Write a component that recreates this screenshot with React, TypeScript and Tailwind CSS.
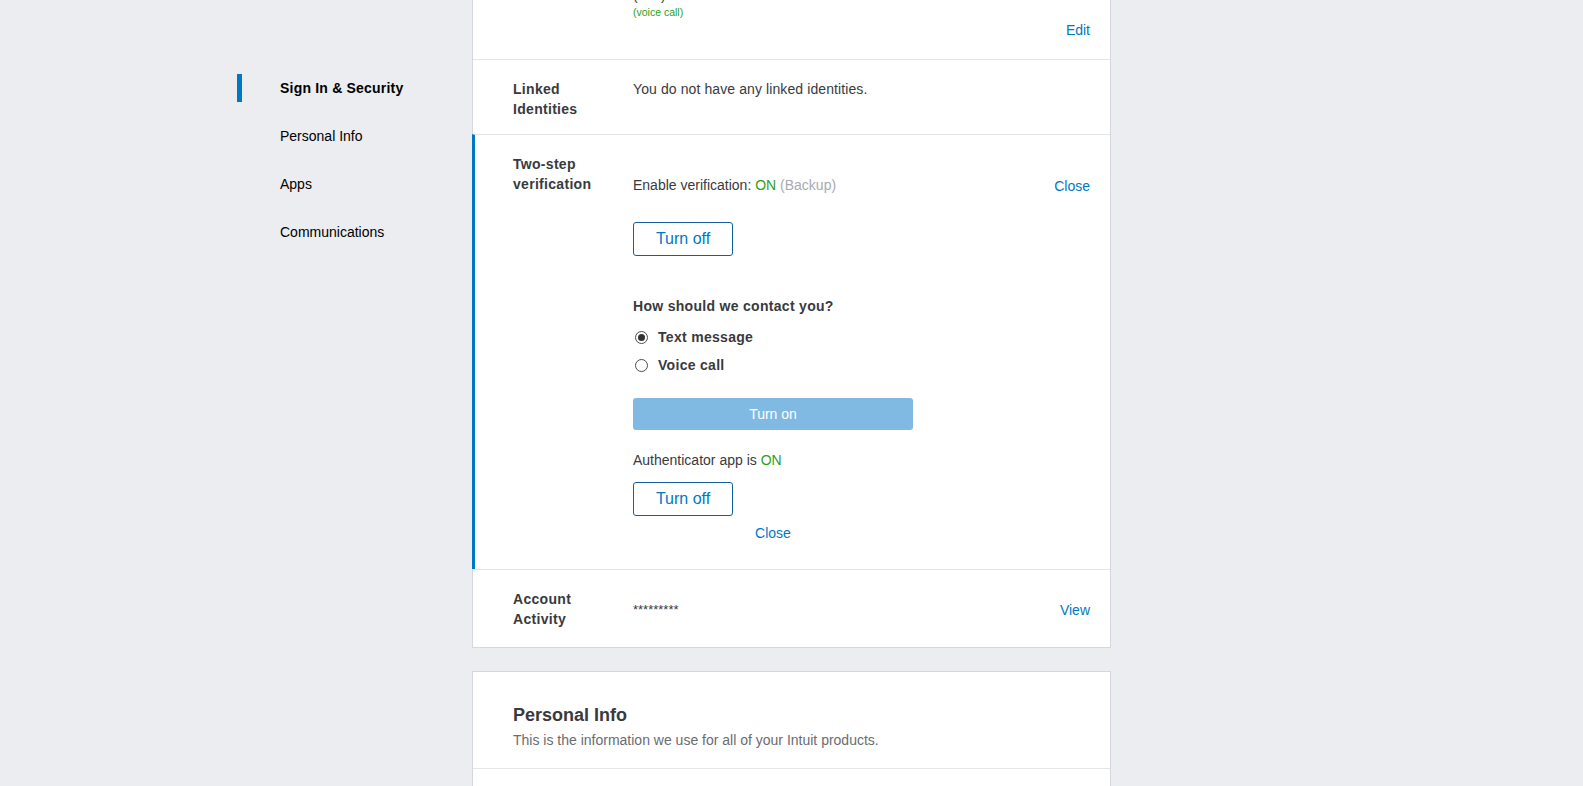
import React from 'react';

const navItems = ['Sign In & Security', 'Personal Info', 'Apps', 'Communications'];

function Sidebar() {
  return (
    <nav className="w-[235px] shrink-0 pt-[64px]">
      {navItems.map((item, i) =>
        i === 0 ? (
          <div key={item} className="flex h-12 items-center">
            <span className="h-[28px] w-[5px] bg-[#0077c5]" />
            <span className="ml-[38px] font-bold tracking-[0.2px] text-black">{item}</span>
          </div>
        ) : (
          <div key={item} className="flex h-12 items-center pl-[43px] text-black">
            {item}
          </div>
        )
      )}
    </nav>
  );
}

function Radio({ checked, label }: { checked?: boolean; label: string }) {
  return (
    <label className="flex h-7 items-center">
      <span className="ml-[2px] flex h-[13px] w-[13px] items-center justify-center rounded-full border border-[#4d4d4d] bg-white">
        {checked && <span className="h-[7px] w-[7px] rounded-full bg-[#333]" />}
      </span>
      <span className="ml-[10px] font-bold tracking-[0.3px]">{label}</span>
    </label>
  );
}

export default function App() {
  return (
    <div className="h-screen overflow-hidden bg-[#ebedf0] font-['Liberation_Sans',Arial,sans-serif] text-[14px] text-[#393a3d]">
      <div className="flex items-start pl-[237px]">
        <Sidebar />

        <main className="-mt-[68px] w-[639px]">
          {/* Sign In & Security card (scrolled) */}
          <section className="border border-[#d4d7dc] bg-white">
            <div className="flex pl-[40px] pr-5 pt-[18px] pb-[19px]">
              <div className="mr-[30px] w-[90px] font-bold leading-5">Phone</div>
              <div className="flex-1">
                <div className="leading-5">(555) 555-0142</div>
                <div className="text-[10.5px] leading-[14px] text-[#2ca01c]">(text message)</div>
                <div className="leading-5">(555) 555-0187</div>
                <div className="text-[10.5px] leading-[14px] text-[#2ca01c]">(voice call)</div>
                <div className="mt-px text-right leading-5">
                  <a className="text-[#0077c5]">Edit</a>
                </div>
              </div>
            </div>

            <div className="flex border-t border-[#e3e5e8] pl-[40px] pr-5 pt-[19px] pb-[15px]">
              <div className="mr-[30px] w-[90px] font-bold leading-5 tracking-[0.3px]">Linked Identities</div>
              <div className="flex-1 leading-5 tracking-[0.1px]">You do not have any linked identities.</div>
            </div>

            <div className="-ml-px flex border-t border-l-[3px] border-t-[#e3e5e8] border-l-[#0077c5] pl-[38px] pr-5 pt-[19px] pb-[26px]">
              <div className="mr-[30px] w-[90px] font-bold leading-5 tracking-[0.3px]">Two-step verification</div>
              <div className="flex-1 pt-[21px]">
                <div className="flex justify-between leading-5">
                  <span>
                    Enable verification: <span className="text-[#2ca01c]">ON</span>{' '}
                    <span className="text-[#a8abb0]">(Backup)</span>
                  </span>
                  <a className="mt-px text-[#0077c5]">Close</a>
                </div>
                <button className="mt-[26px] block h-[34px] w-[100px] rounded-[3px] border border-[#14609e] text-[16px] text-[#0077c5]">
                  Turn off
                </button>
                <p className="mt-[40px] font-bold leading-5 tracking-[0.3px]">How should we contact you?</p>
                <div className="mt-[7px]">
                  <Radio checked label="Text message" />
                  <Radio label="Voice call" />
                </div>
                <button className="mt-[19px] block h-[32px] w-[280px] rounded-[3px] bg-[#80bae3] text-white">
                  Turn on
                </button>
                <p className="mt-[20px] leading-5">
                  Authenticator app is <span className="text-[#2ca01c]">ON</span>
                </p>
                <button className="mt-[12px] block h-[34px] w-[100px] rounded-[3px] border border-[#14609e] text-[16px] text-[#0077c5]">
                  Turn off
                </button>
                <div className="mt-[7px] w-[280px] text-center leading-5">
                  <a className="text-[#0077c5]">Close</a>
                </div>
              </div>
            </div>

            <div className="flex border-t border-[#e3e5e8] pl-[40px] pr-5 pt-[19px] pb-[18px]">
              <div className="mr-[30px] w-[90px] font-bold leading-5 tracking-[0.3px]">Account Activity</div>
              <div className="flex flex-1 justify-between pt-[11px]">
                <span className="text-[13px] leading-5">*********</span>
                <a className="leading-5 text-[#0077c5]">View</a>
              </div>
            </div>
          </section>

          {/* Personal Info card */}
          <section className="mt-[23px] border border-[#d4d7dc] bg-white">
            <div className="pl-[40px] pr-5 pt-[31px] pb-[18px]">
              <h2 className="text-[18px] font-bold leading-6">Personal Info</h2>
              <p className="mt-[3px] leading-5 text-[#6b6c72]">
                This is the information we use for all of your Intuit products.
              </p>
            </div>
            <div className="flex border-t border-[#e3e5e8] pl-[40px] pr-5 pt-[18px] pb-[18px]">
              <div className="mr-[30px] w-[90px] font-bold leading-5">Name</div>
              <div className="flex flex-1 justify-between">
                <span className="leading-5">Jordan Smith</span>
                <a className="leading-5 text-[#0077c5]">Edit</a>
              </div>
            </div>
          </section>
        </main>
      </div>
    </div>
  );
}
